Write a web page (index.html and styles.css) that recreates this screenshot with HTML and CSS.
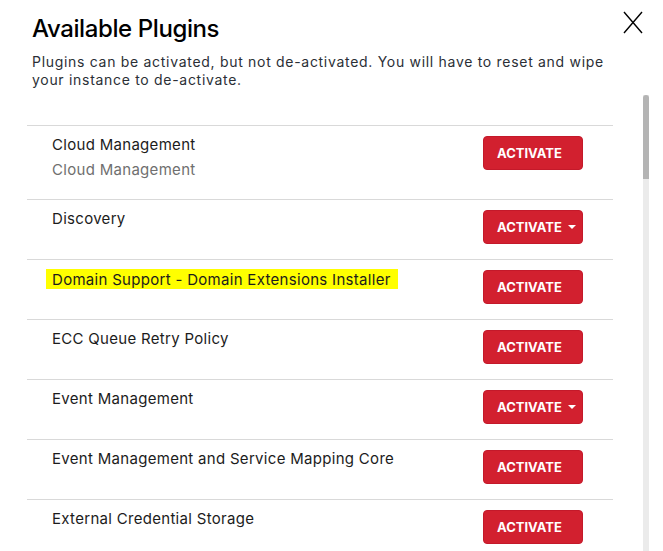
FILE: index.html
```html
<!DOCTYPE html>
<html lang="en">
<head>
<meta charset="utf-8">
<title>Available Plugins</title>
<link rel="stylesheet" href="styles.css">
</head>
<body>
<div class="modal">
  <header class="header">
    <h1 class="title">Available Plugins</h1>
    <button class="close" aria-label="Close">
      <svg width="20" height="23" viewBox="0 0 20 23"><path d="M1 1 L19 22 M19 1 L1 22" stroke="#000" stroke-width="1.4" fill="none"/></svg>
    </button>
  </header>
  <p class="intro">Plugins can be activated, but not de-activated. You will have to reset and wipe your instance to de-activate.</p>
  <div class="scroll">
    <div class="list">
      <div class="row tall">
        <div class="info">
          <div class="name">Cloud Management</div>
          <div class="desc">Cloud Management</div>
        </div>
        <button class="btn">ACTIVATE</button>
      </div>
      <div class="row">
        <div class="info"><div class="name">Discovery</div></div>
        <button class="btn">ACTIVATE<span class="caret"></span></button>
      </div>
      <div class="row">
        <div class="info"><div class="name hl">Domain Support - Domain Extensions Installer</div></div>
        <button class="btn">ACTIVATE</button>
      </div>
      <div class="row">
        <div class="info"><div class="name">ECC Queue Retry Policy</div></div>
        <button class="btn">ACTIVATE</button>
      </div>
      <div class="row">
        <div class="info"><div class="name">Event Management</div></div>
        <button class="btn">ACTIVATE<span class="caret"></span></button>
      </div>
      <div class="row">
        <div class="info"><div class="name">Event Management and Service Mapping Core</div></div>
        <button class="btn">ACTIVATE</button>
      </div>
      <div class="row">
        <div class="info"><div class="name">External Credential Storage</div></div>
        <button class="btn">ACTIVATE</button>
      </div>
    </div>
    <div class="track"><div class="thumb"></div></div>
  </div>
</div>
</body>
</html>
```
FILE: styles.css
```css
html, body {
  margin: 0;
  padding: 0;
  background: #fff;
}
body {
  font-family: Inter, "Open Sans", sans-serif;
  color: #1c1c1c;
  height: 551px;
  overflow: hidden;
}
.modal {
  display: flex;
  flex-direction: column;
  height: 551px;
}
.header {
  display: flex;
  justify-content: space-between;
  align-items: flex-start;
  padding: 13px 20px 0 32px;
}
.title {
  margin: 0;
  font-size: 24px;
  line-height: 32px;
  font-weight: 500;
  letter-spacing: -0.4px;
  color: #000;
}
.close {
  margin-top: -2px;
  padding: 0;
  border: 0;
  background: none;
  width: 20px;
  height: 23px;
  display: block;
}
.close svg { display: block; }
.intro {
  margin: 8px 0 0 0;
  padding: 0 0 0 32px;
  max-width: 595px;
  font-size: 14px;
  line-height: 18px;
  letter-spacing: 0.7px;
  color: #2b2f36;
}
.scroll {
  flex: 1;
  display: flex;
  gap: 30px;
  margin-top: 6px;
  padding: 0 14px 0 27px;
  min-height: 0;
}
.list {
  flex: 1;
  padding-top: 30px;
}
.row {
  display: flex;
  justify-content: space-between;
  align-items: flex-start;
  border-top: 1px solid #d9d9d9;
  padding: 10px 30px 15px 25px;
}
.info {
  margin-top: -1px;
}
.name {
  font-size: 15px;
  line-height: 20px;
  letter-spacing: 0.3px;
  color: #1c1c1c;
}
.desc {
  margin-top: 5px;
  padding-bottom: 4px;
  font-size: 15px;
  line-height: 20px;
  letter-spacing: 0.3px;
  color: #6f6f6f;
}
.name.hl {
  display: inline-block;
  background: #ffff00;
  line-height: 18px;
  padding: 2px 7px 0 6px;
  margin: -1px 0 0 -6px;
}
.btn {
  width: 100px;
  height: 34px;
  box-sizing: border-box;
  display: flex;
  align-items: center;
  padding: 0 0 0 13px;
  background: #d2202f;
  border: 1px solid #c4192a;
  border-radius: 4px;
  color: #fff;
  font-family: Inter, "Open Sans", sans-serif;
  font-size: 13px;
  font-weight: 700;
  flex-shrink: 0;
}
.caret {
  display: inline-block;
  width: 0;
  height: 0;
  margin-left: 6px;
  border-left: 4px solid transparent;
  border-right: 4px solid transparent;
  border-top: 4px solid #fff;
}
.track {
  width: 6px;
  background: #ebebeb;
  align-self: stretch;
}
.thumb {
  height: 84px;
  background: #b4b4b4;
  border-radius: 3px 3px 0 0;
}
```
